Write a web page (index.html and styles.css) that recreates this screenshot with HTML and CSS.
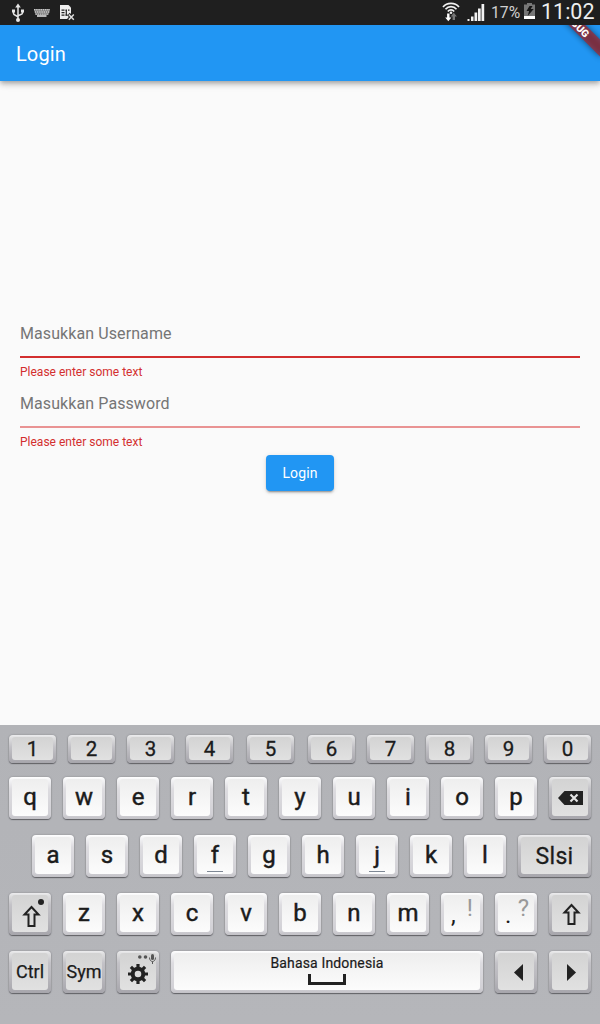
FILE: index.html
```html
<!DOCTYPE html>
<html lang="id">
<head>
<meta charset="utf-8">
<title>Login</title>
<link rel="stylesheet" href="styles.css">
</head>
<body>
<div class="screen">
  <div class="status">
    <svg class="usb" width="14" height="20" viewBox="0 0 14 20" fill="none" stroke="#e6e6e6" stroke-width="1.5"><path d="M7 3v14M2.500 8v2.500c0 2 4.500 2 4.500 4M11.500 8v2c0 2-4.500 1.500-4.500 3.500"/><path d="M7 .5l2.800 4H4.200z" fill="#e6e6e6" stroke="none"/><circle cx="7" cy="17" r="2" fill="#e6e6e6" stroke="none"/><path d="M1 6.500h3v3H1zM10 6.500h3v3h-3z" fill="#e6e6e6" stroke="none"/></svg>
    <svg class="kbd" width="16" height="8" viewBox="0 0 16 8"><path d="M0 0h16l-1.500 6h-13z" fill="#777"/><g stroke="#c8c8c8" stroke-width="1.400" stroke-dasharray="1.400 .8"><path d="M0 .8h16M.8 3h14.500M1.500 5.100h13"/></g><path d="M3 7h9.500" stroke="#e0e0e0" stroke-width="1.600"/></svg>
    <svg class="sim" width="15" height="16" viewBox="0 0 15 16"><path d="M0 0h8.500L11 2.500V14H0z" fill="#eee"/><path d="M1.500 5.200h3M1.500 7.700h3M1.500 10.200h3M5.500 5.200h1.500M8 5.200h1.500M5.500 10.200h2" stroke="#222" stroke-width="1.300"/><path d="M6.300 5v5.500" stroke="#222" stroke-width="1.200"/><path d="M8.500 9l5.500 6M14 9l-5.500 6" stroke="#1f1f1f" stroke-width="3.500"/><path d="M8.800 9.500l5 5.300M13.800 9.500l-5 5.300" stroke="#ddd" stroke-width="1.500"/></svg>
    <span class="grow"></span>
    <svg class="wifi" width="18" height="20" viewBox="0 0 18 20" fill="none" stroke="#f2f2f2" stroke-width="1.700"><path d="M1 5C5 .2 13 .2 17 5M3.500 7.300C6.500 3.700 11.500 3.700 14.500 7.300M5.800 9.500C7.600 7.400 10.400 7.400 12.200 9.500"/><circle cx="9" cy="10.800" r="1.300" fill="#eee" stroke="none"/><path d="M5.100 11.500h2.400v4H9.400L6.300 19.300 3.200 15.500h1.900z" fill="#fff" stroke="none"/><path d="M10.600 18v-3.500H8.700l3.100-3.800 3.100 3.800h-1.900V18z" fill="#777" stroke="none"/></svg>
    <svg class="signal" width="18" height="18" viewBox="0 0 18 18" fill="#f2f2f2"><path d="M.5 16h2v2h-2zM4 13.500h2.500V18H4zM7.500 9.500h2.700V18H7.500zM11 5.500h2.700V18H11zM14.500 1h2.700v17h-2.700z"/></svg>
    <span class="percent">17%</span>
    <svg class="battery" width="11" height="16" viewBox="0 0 11 16"><path d="M0 1.500h3V0h5v1.500h3V16H0z" fill="#777"/><path d="M0 13h11v3H0z" fill="#fff"/><path d="M5.500 3h3L6.700 6h3l-6 7 1.400-5H2.500z" fill="#151515"/></svg>
    <span class="clock">11:02</span>
  </div>
  <header class="appbar"><h1>Login</h1></header>
  <svg class="banner" width="60" height="75" viewBox="540 0 60 75"><defs><filter id="soft" x="-30%" y="-100%" width="160%" height="300%"><feGaussianBlur stdDeviation="3"/></filter></defs><g transform="translate(600 0) rotate(45)"><rect x="-40" y="28" width="80" height="12" fill="#000" opacity=".5" filter="url(#soft)"/><rect x="-40" y="28" width="80" height="12" fill="#b71c1c" fill-opacity=".627"/><text class="banner-text" x="0" y="37.700" text-anchor="middle">DEBUG</text></g></svg>
  <main class="form">
    <div class="field active"><div class="hint">Masukkan Username</div><p class="error">Please enter some text</p></div>
    <div class="field"><div class="hint">Masukkan Password</div><p class="error">Please enter some text</p></div>
    <button class="submit">Login</button>
  </main>
  <section class="keyboard">
    <div class="row digits">
      <div class="key dark"><span>1</span></div><div class="key dark"><span>2</span></div><div class="key dark"><span>3</span></div><div class="key dark wide-gap"><span>4</span></div><div class="key dark wide-gap"><span>5</span></div><div class="key dark"><span>6</span></div><div class="key dark"><span>7</span></div><div class="key dark"><span>8</span></div><div class="key dark"><span>9</span></div><div class="key dark"><span>0</span></div>
    </div>
    <div class="row">
      <div class="key"><span>q</span></div><div class="key"><span>w</span></div><div class="key"><span>e</span></div><div class="key"><span>r</span></div><div class="key"><span>t</span></div><div class="key"><span>y</span></div><div class="key"><span>u</span></div><div class="key"><span>i</span></div><div class="key"><span>o</span></div><div class="key"><span>p</span></div>
      <div class="key dark"><span><svg width="36" height="37" viewBox="0 0 36 37"><path d="M6 19l6.500-7H31v14H12.500z" fill="#222"/><path d="M18.500 15.500l7 7M25.500 15.500l-7 7" stroke="#e4e4e4" stroke-width="2.200"/></svg></span></div>
    </div>
    <div class="row indent">
      <div class="key"><span>a</span></div><div class="key"><span>s</span></div><div class="key"><span>d</span></div><div class="key home"><span>f</span></div><div class="key"><span>g</span></div><div class="key"><span>h</span></div><div class="key home"><span>j</span></div><div class="key"><span>k</span></div><div class="key"><span>l</span></div>
      <div class="key dark enter"><span>Slsi</span></div>
    </div>
    <div class="row">
      <div class="key dark"><span><svg width="36" height="37" viewBox="0 0 36 37"><path d="M19.500 12l7 7.500h-4v11.500h-6V19.500h-4z" fill="none" stroke="#222" stroke-width="2"/><circle cx="29" cy="7" r="3" fill="#222"/></svg></span></div>
      <div class="key"><span>z</span></div><div class="key"><span>x</span></div><div class="key"><span>c</span></div><div class="key"><span>v</span></div><div class="key"><span>b</span></div><div class="key"><span>n</span></div><div class="key"><span>m</span></div>
      <div class="key punct"><span><b>,</b><i>!</i></span></div><div class="key punct query"><span><b>.</b><i>?</i></span></div>
      <div class="key dark"><span><svg width="36" height="37" viewBox="0 0 36 37"><path d="M19.500 10l7 7.500h-4v11.500h-6V17.500h-4z" fill="none" stroke="#222" stroke-width="2"/></svg></span></div>
    </div>
    <div class="row">
      <div class="key dark func"><span>Ctrl</span></div><div class="key dark func"><span>Sym</span></div>
      <div class="key dark"><span><svg width="36" height="37" viewBox="0 0 36 37"><circle cx="18" cy="21" r="5.300" fill="none" stroke="#222" stroke-width="4"/><path d="M18 11v3.500M18 27.500V31M8 21h3.500M24.500 21H28M10.900 13.900l2.500 2.500M22.600 25.600l2.500 2.500M10.900 28.100l2.500-2.500M22.600 16.400l2.500-2.500" stroke="#222" stroke-width="3.200"/><circle cx="19.800" cy="4" r="1.800" fill="#555"/><circle cx="25.500" cy="4" r="1.800" fill="#555"/><rect x="31" y="1" width="3" height="6" rx="1.500" fill="#555"/><path d="M29.500 4.500c0 5.300 6 5.300 6 0M32.500 8.500V11" fill="none" stroke="#555"/></svg></span></div>
      <div class="key space"><span><em>Bahasa Indonesia</em><svg width="38" height="11" viewBox="0 0 38 11"><path d="M1.500 0v9.500h35V0" fill="none" stroke="#222" stroke-width="3"/></svg></span></div>
      <div class="key dark"><span><svg width="36" height="37" viewBox="0 0 36 37"><path d="M25 11v17l-9-8.500z" fill="#222"/></svg></span></div>
      <div class="key dark"><span><svg width="36" height="37" viewBox="0 0 36 37"><path d="M15 11v17l9-8.500z" fill="#222"/></svg></span></div>
    </div>
  </section>
</div>
</body>
</html>
```
FILE: styles.css
```css
* { box-sizing: border-box; }
body { margin: 0; font-family: Roboto, sans-serif; }
svg { display: block; flex: none; }
.screen { position: relative; display: flex; flex-direction: column; width: 600px; height: 1024px; overflow: hidden; background: #fafafa; }

.status { position: relative; z-index: 3; flex: none; display: flex; align-items: flex-start; height: 25px; padding: 0 6px 0 11px; background: #1f1f1f; }
.usb { margin-top: 3px; }
.kbd { margin: 9px 0 0 9px; }
.sim { margin: 5px 0 0 10px; }
.grow { flex: 1; }
.wifi { margin: 2px 7px 0 0; }
.signal { margin: 3px 6px 0 0; }
.percent { width: 33px; color: #d0d0d0; font-size: 15.7px; line-height: 25px; }
.battery { margin: 3px 6px 0 0; }
.clock { width: 53px; color: #eee; font-size: 21.5px; line-height: 24px; white-space: nowrap; }

.appbar { position: relative; z-index: 1; flex: none; display: flex; align-items: center; height: 56px; padding: 2px 16px 0; background: #2196f3; box-shadow: 0 2px 4px -1px rgba(0,0,0,.2), 0 4px 5px rgba(0,0,0,.14), 0 1px 10px rgba(0,0,0,.12); }
.appbar h1 { margin: 0; color: #fff; font-size: 20px; font-weight: 400; letter-spacing: .1px; }
.banner { position: absolute; z-index: 2; top: 0; right: 0; }
.banner-text { fill: #fff; font: 900 10.2px Roboto, sans-serif; }

.form { flex: 1; display: flex; flex-direction: column; align-items: center; justify-content: center; padding: 0 20px 4px; }
.field { width: 100%; height: 70px; }
.hint { height: 46px; padding-top: 11px; border-bottom: 2px solid #e99393; color: #757575; font-size: 16px; line-height: 22px; letter-spacing: .09px; }
.active .hint { border-color: #d32f2f; }
.error { margin: 6px 0 0; color: #d32f2f; font-size: 12px; line-height: 16px; }
.submit { width: 68px; height: 36px; margin: 3px 0 0; padding: 0; border: 0; border-radius: 4px; background: #2196f3; color: #fff; font: 400 14px Roboto, sans-serif; letter-spacing: .1px; box-shadow: 0 3px 1px -2px rgba(0,0,0,.2), 0 2px 2px rgba(0,0,0,.14), 0 1px 5px rgba(0,0,0,.12); }

.keyboard { flex: none; display: flex; flex-direction: column; gap: 16px; height: 299px; padding: 10px 9px 0; background: linear-gradient(#b2b3b7, #b5b6ba); }
.row { display: flex; gap: 12px; height: 42px; }
.row.digits { height: 28px; margin-bottom: -2px; }
.row.indent { padding-left: 23px; }
.key { position: relative; flex: none; width: 42px; padding: 2px 3px 3px; border-radius: 4px; background: linear-gradient(#fff 0, #f4f4f6 3px, #dddce0 12px, #d2d1d6 37px, #c3c2c7 100%); box-shadow: 0 1px 1px rgba(50,50,55,.6), 0 0 2px rgba(60,60,65,.4); }
.key > span { display: flex; align-items: center; justify-content: center; width: 100%; height: 100%; padding-bottom: 1px; border-radius: 3px; background: linear-gradient(#eee, #fcfcfc); color: #1b1b1b; font-size: 24px; font-weight: 400; -webkit-text-stroke: .45px #1b1b1b; line-height: 28px; white-space: nowrap; }
.key.dark { background: linear-gradient(#ececee 0, #dededf 3px, #c3c2c7 12px, #bab9be 60%, #a7a6ac 100%); }
.key.dark > span { background: linear-gradient(#d3d3d3, #e1e1e1); }
.key > span:has(> svg) { padding: 0; }
.digits .key { width: 47px; }
.digits .wide-gap { margin-right: 2px; }
.digits .key > span { padding: 1px 0 0; font-size: 20.5px; line-height: 22px; -webkit-text-stroke-width: .3px; }
.home::after { content: ""; position: absolute; left: 13px; bottom: 5px; width: 16px; height: 1px; background: #7d8794; }
.key.enter { width: 73px; }
.key.enter > span { padding: 3px 0 0; font-size: 23px; letter-spacing: .3px; -webkit-text-stroke-width: .3px; }
.key.func > span { padding: 0; font-size: 18px; -webkit-text-stroke-width: .25px; }
.key.punct > span { justify-content: space-between; align-items: flex-start; padding: 0 7px 0 7px; -webkit-text-stroke-width: 0; }
.key.query > span { padding-right: 5px; }
.punct b { padding-top: 6px; font-weight: 400; }
.punct i { margin-top: -1px; font-style: normal; color: #999; }
.key.space { width: 312px; }
.key.space > span { flex-direction: column; justify-content: flex-start; }
.space em { padding-top: 2px; font-size: 14px; font-style: normal; line-height: 16px; letter-spacing: .15px; -webkit-text-stroke-width: .2px; }
.space svg { margin-top: 3px; }
```
